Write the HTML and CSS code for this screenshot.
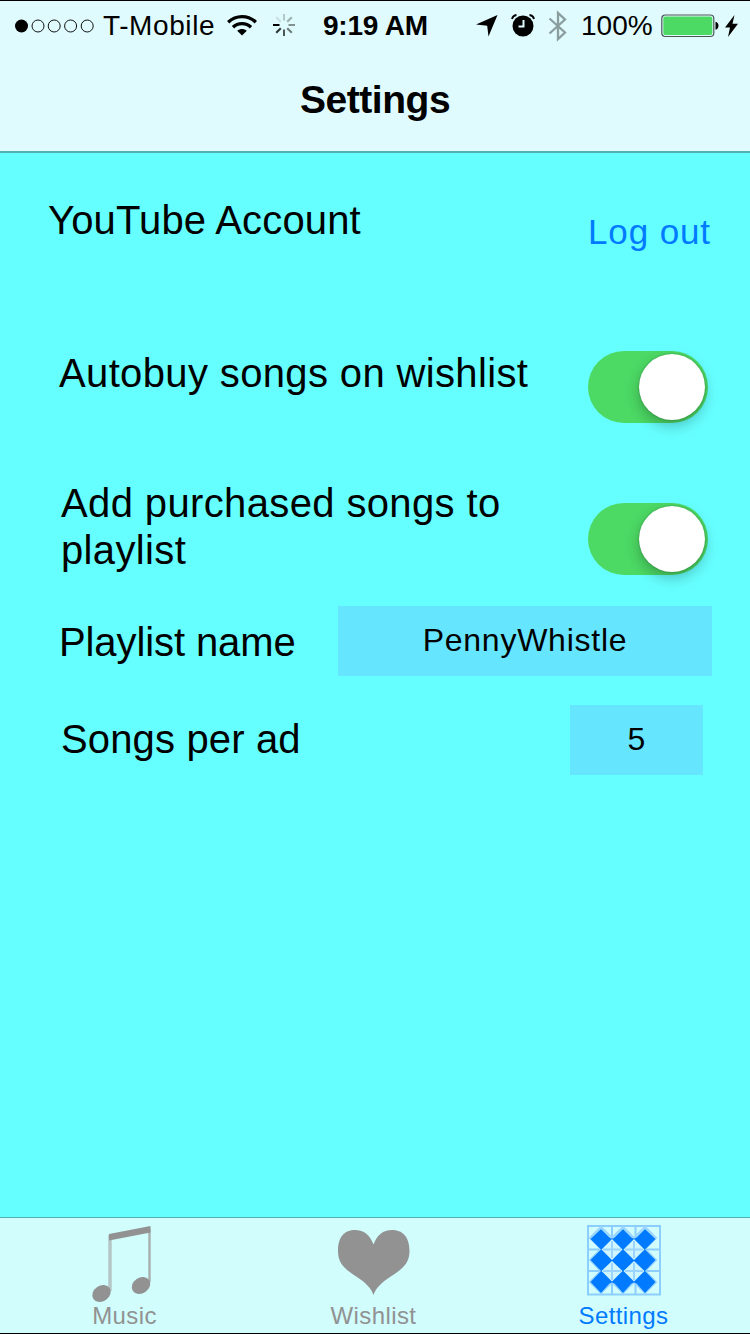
FILE: index.html
```html
<!DOCTYPE html>
<html lang="en">
<head>
<meta charset="utf-8">
<title>Settings</title>
<link rel="stylesheet" href="styles.css">
</head>
<body>
<div class="screen">
  <header class="header">
    <div class="status">
      <svg class="signal" width="82" height="16" viewBox="0 0 82 16" fill="none" stroke="#111"><circle cx="7.5" cy="8" r="6.5" fill="#000" stroke="none"/><circle cx="24" cy="8" r="6"/><circle cx="40.2" cy="8" r="6"/><circle cx="56.6" cy="8" r="6"/><circle cx="73.2" cy="8" r="6"/></svg>
      <span class="carrier">T-Mobile</span>
      <svg class="wifi" width="30" height="22" viewBox="0 0 30 22" fill="none" stroke="#000" stroke-width="3.4"><path d="M1.2 8.2C9 .8 21 .8 28.800 8.200"/><path d="M6 13.200C11 8.400 19 8.400 24 13.200"/><path d="M10.200 16.800C13 14.400 17 14.400 19.800 16.800L15 21.500Z" fill="#000" stroke="none"/></svg>
      <svg class="spinner" width="24" height="24" viewBox="-12 -12 24 24" stroke="#000" stroke-width="2"><path d="M-4.500 0H-11"/><path d="M-3.200 3.200L-7.800 7.800" opacity=".8"/><path d="M0 4.500V11" opacity=".65"/><path d="M3.200 3.200L7.800 7.800" opacity=".52"/><path d="M4.500 0H11" opacity=".42"/><path d="M3.200-3.200L7.800-7.800" opacity=".3"/><path d="M0-4.500V-11" opacity=".2"/><path d="M-3.200-3.200L-7.800-7.800" opacity=".1"/></svg>
      <span class="time">9:19 AM</span>
      <svg class="location" width="22" height="22" viewBox="0 0 22 22"><path d="M21.500 0L12.500 21.500L11.200 10.800L0 9.500Z"/></svg>
      <svg class="alarm" width="24" height="24" viewBox="0 0 24 24"><circle cx="12" cy="12" r="10.500"/><path d="M1 5C1.500 2.800 3.200 1.300 5.500 1M23 5C22.500 2.800 20.800 1.300 18.500 1" fill="none" stroke="#000" stroke-width="1.800"/><path d="M12.500 6V12.500H7.500" fill="none" stroke="#e0fbfd" stroke-width="2"/></svg>
      <svg class="bluetooth" width="20" height="32" viewBox="0 0 20 32" fill="none" stroke="#8a9d9f" stroke-width="2.300"><path d="M1.500 8.500L17 22.500L10 29V3L17 9.500L1.500 23.500"/></svg>
      <span class="percent">100%</span>
      <svg class="battery" width="58" height="24" viewBox="0 0 58 24"><rect x=".8" y="1" width="52" height="21.500" rx="3.500" fill="none" stroke="#4b5556" stroke-width="1.200"/><rect x="2.300" y="2.500" width="49" height="18.500" rx="2" fill="#4cd964"/><path d="M54.500 7.800C58.500 8.300 58.500 15.200 54.500 15.700Z"/></svg>
      <svg class="bolt" width="13" height="22" viewBox="0 0 13 22"><path d="M9.500 0L0 12.500H5L3 22L13 8.800H7.500Z"/></svg>
    </div>
    <h1 class="title">Settings</h1>
  </header>
  <main class="content">
    <section class="row account"><span class="label">YouTube Account</span><button class="logout">Log out</button></section>
    <section class="row autobuy"><span class="label">Autobuy songs on wishlist</span><span class="switch"><span class="knob"></span></span></section>
    <section class="row purchased"><span class="label">Add purchased songs to<br>playlist</span><span class="switch"><span class="knob"></span></span></section>
    <section class="row playlist"><span class="label">Playlist name</span><span class="field">PennyWhistle</span></section>
    <section class="row ads"><span class="label">Songs per ad</span><span class="field small">5</span></section>
  </main>
  <nav class="tabs">
    <a class="tab">
      <svg width="76" height="80" viewBox="0 0 76 80"><path d="M23 16V72" stroke="#b6c6c6" stroke-width="3.500"/><path d="M62.500 10V63" stroke="#a8b0b0" stroke-width="2.500"/><path d="M22 15L63.500 7V13.500L22 21.500Z"/><ellipse cx="14.500" cy="74.500" rx="9.800" ry="7.800" transform="rotate(-34 14.500 74.500)"/><ellipse cx="54" cy="66.500" rx="9.800" ry="7.800" transform="rotate(-34 54 66.500)"/></svg>
      <span class="tab-name music">Music</span>
    </a>
    <a class="tab">
      <svg width="76" height="80" viewBox="0 0 76 80"><path d="M37.500 76C35 69 30 64 21 58C9 50 2 45 2 32C2 17 9 11 19 11C28 11 34 16 37.500 25.500C41 16 47 11 56 11C66 11 73.500 17 73.500 32C73.500 45 66 50 54 58C45 64 40 69 37.500 76Z"/></svg>
      <span class="tab-name wishlist">Wishlist</span>
    </a>
    <a class="tab active">
      <svg width="76" height="80" viewBox="0 0 76 80">
        <path d="M2 7H74V75.500H2ZM26 7V75.500M49.500 7V75.500M2 30.500H74M2 52H74" fill="none" stroke="#8ccfff" stroke-width="2"/>
        <path d="M15 8L26 19L37 8L48 19L59 8L70 19L59 30L70 41L59 52L70 63L59 74L48 63L37 74L26 63L15 74L4 63L15 52L4 41L15 30L4 19Z" fill="none" stroke="#9ad4ff" stroke-width="2"/>
        <path d="M15 10L23 18Q26 21 29 18L37 10L45 18Q48 21 51 18L59 10L69.500 20L59 30.500L69.500 41L59 52L69.500 63L59 74L51 65Q48 62 45 65L37 74L29 65Q26 62 23 65L15 74L4.500 63L15 52L4.500 41L15 30.500L4.500 20Z"/>
        <path d="M26 20L36.500 30.500L26 41L15.500 30.500ZM48 20L58.500 30.500L48 41L37.500 30.500ZM26 42L36.500 52L26 62.500L15.500 52ZM48 42L58.500 52L48 62.500L37.500 52Z" fill="#cff6fe"/>
        <path d="M26 22V39M48 22V39M26 44V61M48 44V61M17 30.500H35M39 30.500H57M17 52H35M39 52H57" fill="none" stroke="#9ad4ff" stroke-width="2"/>
      </svg>
      <span class="tab-name settings">Settings</span>
    </a>
  </nav>
</div>
</body>
</html>
```
FILE: styles.css
```css
* { box-sizing: border-box; }
body { margin: 0; font-family: "Liberation Sans", Arial, sans-serif; color: #000; }
.screen { width: 750px; height: 1334px; display: flex; flex-direction: column; background: #66ffff; border-top: 1px solid #000; border-bottom: 1px solid #000; overflow: hidden; }
svg { display: block; flex: none; overflow: visible; }
.header { height: 152px; background: #e0fbfd; border-bottom: 2px solid #52b2b2; }
.status { height: 50px; display: flex; align-items: center; padding-left: 14px; font-size: 28px; white-space: nowrap; }
.carrier { width: 112px; margin-left: 7px; letter-spacing: .6px; }
.wifi { margin: -3px 0 0 12px; }
.spinner { margin-left: 15px; margin-top: -2px; }
.time { width: 104px; margin-left: 27px; font-weight: bold; letter-spacing: -.2px; }
.location { margin-left: 49px; }
.alarm { margin: -1px 0 0 13px; }
.bluetooth { margin-left: 13px; }
.percent { width: 72px; margin-left: 13px; }
.battery { margin-left: 8px; }
.bolt { margin-left: 6px; }
.title { margin: 26px 0 0; font-size: 39px; line-height: 46px; font-weight: bold; letter-spacing: -.45px; text-align: center; }
.content { flex: 1; display: flex; flex-direction: column; }
.row { display: flex; justify-content: space-between; align-items: flex-start; flex: none; }
.label { font-size: 40px; line-height: 47px; white-space: nowrap; }
.account { height: 198px; padding: 44px 39px 0 48px; }
.account .label { letter-spacing: .15px; }
.logout { margin: 15px 0 0; padding: 0; border: 0; background: none; font: 35px/40px "Liberation Sans", Arial, sans-serif; letter-spacing: .9px; color: #007aff; }
.autobuy { height: 152px; padding: 0 42px 0 59px; }
.autobuy .label { margin-top: -1px; letter-spacing: .36px; }
.purchased { height: 103px; padding: 0 42px 0 61px; }
.playlist { height: 99px; padding: 0 38px 0 59px; }
.ads { height: 70px; padding: 0 47px 0 61px; }
.purchased .label { margin-top: -23px; letter-spacing: .37px; }
.playlist .label { margin-top: 13px; letter-spacing: -.1px; }
.ads .label { margin-top: 11px; letter-spacing: .15px; }
.switch { display: flex; justify-content: flex-end; width: 120px; height: 72px; padding: 3px; border-radius: 36px; background: #4cd964; }
.knob { width: 66px; height: 66px; border-radius: 50%; background: #fff; box-shadow: 0 0 2px rgba(0,0,0,.3), 0 6px 14px rgba(0,0,0,.25); }
.field { width: 374px; height: 70px; background: #66e5ff; font-size: 32px; line-height: 69px; letter-spacing: .75px; text-align: center; }
.field.small { width: 133px; line-height: 68px; letter-spacing: 0; }
.tabs { height: 116px; display: flex; border-top: 1px solid #52b2b2; background: #d1fdfd; }
.tab { width: 250px; padding-top: 1px; padding-right: 3px; display: flex; flex-direction: column; align-items: center; fill: #929292; color: #929292; }
.tab:first-child { padding-right: 1px; }
.tab.active { fill: #007aff; color: #007aff; }
.tab-name { margin-top: 4px; font-size: 24px; line-height: 26px; letter-spacing: .4px; }
```
